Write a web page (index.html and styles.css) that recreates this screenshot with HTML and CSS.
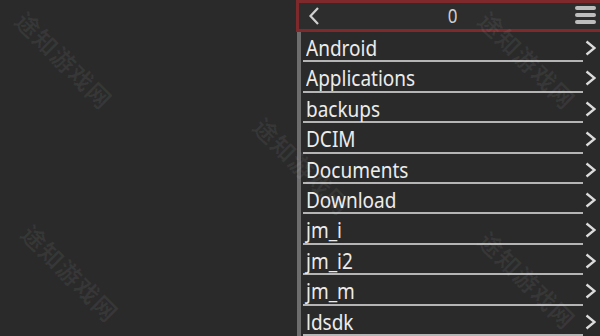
FILE: index.html
```html
<!DOCTYPE html>
<html lang="en">

<head>
    <meta charset="UTF-8">
    <meta name="viewport" content="width=device-width, initial-scale=1.0">
    <title>File Browser</title>
    <link rel="stylesheet" href="styles.css">
</head>

<body>
    <div class="screen">
        <div class="blank"></div>

        <div class="browser">
            <header class="toolbar">
                <div class="back">
                    <svg width="12" height="18" viewBox="0 0 12 18">
                        <polyline points="10,1 2.5,9 10,17" fill="none" stroke="#cfcfcf" stroke-width="2.2" />
                    </svg>
                </div>
                <div class="count"><span>0</span></div>
                <div class="menu">
                    <span></span>
                    <span></span>
                    <span></span>
                </div>
            </header>

            <ul class="folders">
                <li><span class="name"><span>Android</span></span><svg class="go" viewBox="0 0 11 16"><polyline points="1.5,1.5 9.5,8 1.5,14.5" /></svg></li>
                <li><span class="name"><span>Applications</span></span><svg class="go" viewBox="0 0 11 16"><polyline points="1.5,1.5 9.5,8 1.5,14.5" /></svg></li>
                <li><span class="name"><span>backups</span></span><svg class="go" viewBox="0 0 11 16"><polyline points="1.5,1.5 9.5,8 1.5,14.5" /></svg></li>
                <li><span class="name"><span>DCIM</span></span><svg class="go" viewBox="0 0 11 16"><polyline points="1.5,1.5 9.5,8 1.5,14.5" /></svg></li>
                <li><span class="name"><span>Documents</span></span><svg class="go" viewBox="0 0 11 16"><polyline points="1.5,1.5 9.5,8 1.5,14.5" /></svg></li>
                <li><span class="name"><span>Download</span></span><svg class="go" viewBox="0 0 11 16"><polyline points="1.5,1.5 9.5,8 1.5,14.5" /></svg></li>
                <li><span class="name"><span>jm_i</span></span><svg class="go" viewBox="0 0 11 16"><polyline points="1.5,1.5 9.5,8 1.5,14.5" /></svg></li>
                <li><span class="name"><span>jm_i2</span></span><svg class="go" viewBox="0 0 11 16"><polyline points="1.5,1.5 9.5,8 1.5,14.5" /></svg></li>
                <li><span class="name"><span>jm_m</span></span><svg class="go" viewBox="0 0 11 16"><polyline points="1.5,1.5 9.5,8 1.5,14.5" /></svg></li>
                <li><span class="name"><span>ldsdk</span></span><svg class="go" viewBox="0 0 11 16"><polyline points="1.5,1.5 9.5,8 1.5,14.5" /></svg></li>
            </ul>
        </div>

        <!-- watermark -->
        <span class="mark mark-1">途知游戏网</span>
        <span class="mark mark-2">途知游戏网</span>
        <span class="mark mark-3">途知游戏网</span>
        <span class="mark mark-4">途知游戏网</span>
        <span class="mark mark-5">途知游戏网</span>
    </div>
</body>

</html>
```

FILE: styles.css
```css
body {
    margin: 0;
    background-color: #2a2a2a;
    font-family: "Noto Sans", "Open Sans", sans-serif;
}

.screen {
    position: relative;
    display: flex;
    width: 600px;
    height: 336px;
    overflow: hidden;
}

.blank {
    width: 296px;
}

.browser {
    flex: 1;
    display: flex;
    flex-direction: column;
}

.toolbar {
    box-sizing: border-box;
    height: 35px;
    display: flex;
    align-items: center;
    background-color: #2d2d2d;
    border: 3px solid #7e2a2d;
    border-right: none;
}

.back {
    width: 30px;
    display: flex;
    justify-content: center;
}

.count {
    flex: 1;
    text-align: center;
    padding-left: 10px;
    color: #cfcfcf;
    font-size: 17px;
    line-height: 20px;
}

.count span {
    display: inline-block;
    transform: scaleY(1.12);
}

.menu {
    width: 30px;
    display: flex;
    flex-direction: column;
    gap: 3px;
    align-items: flex-end;
    margin-top: -2px;
    margin-right: 4px;
}

.menu span {
    width: 21px;
    height: 4px;
    border-radius: 2px;
    background-color: #bdbdbd;
}

.folders {
    flex: 1;
    margin: 0;
    padding: 0;
    list-style: none;
    border-left: 4px solid #6d6d6d;
    margin-left: 1px;
}

.folders li {
    display: flex;
    height: 30.4px;
}

.name {
    flex: 1;
    box-sizing: border-box;
    margin-left: 2px;
    padding-left: 3px;
    padding-top: 8px;
    border-bottom: 2px solid #b5b5b5;
    color: #ececec;
    font-size: 19px;
    line-height: 18px;
}

/* the source screen is a little stretched vertically */
.name span {
    display: inline-block;
    transform: scaleY(1.1);
    transform-origin: 0 16px;
}

.go {
    width: 11px;
    height: 16px;
    margin: 8px 4px 0 2px;
    fill: none;
    stroke: #dcdcdc;
    stroke-width: 2.3;
}

.mark {
    position: absolute;
    color: rgba(255, 255, 255, 0.06);
    font-family: "Noto Sans CJK SC", sans-serif;
    font-size: 24px;
    font-weight: bold;
    letter-spacing: 1px;
    transform: rotate(45deg);
    white-space: nowrap;
    pointer-events: none;
}

.mark-1 {
    left: 2px;
    top: 42px;
}

.mark-2 {
    left: 240px;
    top: 148px;
}

.mark-3 {
    left: 8px;
    top: 255px;
}

.mark-4 {
    left: 465px;
    top: 42px;
}

.mark-5 {
    left: 465px;
    top: 262px;
}
```
